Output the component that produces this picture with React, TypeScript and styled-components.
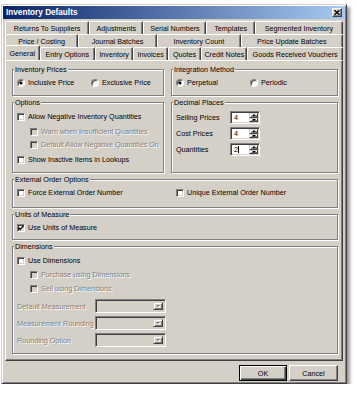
import styled, { createGlobalStyle } from 'styled-components';
import { FC, ReactNode } from 'react';

const FACE = '#d4d0c8';
const SHADOW = '#808080';
const DARK = '#404040';

const GlobalStyle = createGlobalStyle`
  * { box-sizing: border-box; }
  html, body { margin: 0; padding: 0; background: #fff; }
  body {
    font-family: "Liberation Sans", Arial, sans-serif;
    font-size: 7.2px;
    color: #000;
  }
`;

const Window = styled.div`
  margin: 4px 0 0 1px;
  width: 346px;
  height: 380px;
  padding: 1px;
  background: ${FACE};
  border: 1px solid;
  border-color: ${FACE} ${DARK} ${DARK} ${FACE};
  box-shadow: inset 1px 1px 0 #fff, inset -1px -1px 0 ${SHADOW}, 3px 3px 3px rgba(0, 0, 0, 0.4);
  display: flex;
  flex-direction: column;
`;

const TitleBar = styled.div`
  flex: none;
  height: 13px;
  display: flex;
  align-items: center;
  justify-content: space-between;
  padding: 0 3px 0 3px;
  background: linear-gradient(to right, #0a246a, #a6caf0);
`;

const Title = styled.span`
  color: #fff;
  font-weight: bold;
  font-size: 8.2px;
`;

const CloseButton = styled.div`
  width: 10px;
  height: 9px;
  background: ${FACE};
  border: 1px solid;
  border-color: #fff ${DARK} ${DARK} #fff;
  box-shadow: inset -1px -1px 0 ${SHADOW};
  display: flex;
  align-items: center;
  justify-content: center;
`;

const Body = styled.div`
  flex: 1;
  display: flex;
  flex-direction: column;
  padding: 2px 2px 0;
`;

const TabRow = styled.div`
  display: flex;
  height: 13px;
`;

const Tab = styled.div<{ $w: number; $active?: boolean }>`
  flex: ${p => p.$w} 1 0;
  min-width: 0;
  height: ${p => (p.$active ? 15 : 13)}px;
  margin-top: ${p => (p.$active ? -2 : 0)}px;
  position: relative;
  z-index: ${p => (p.$active ? 2 : 0)};
  background: ${FACE};
  border: 1px solid;
  border-bottom: none;
  border-color: #fff ${DARK} transparent #fff;
  box-shadow: inset -1px 0 0 ${SHADOW};
  border-radius: 2px 2px 0 0;
  display: flex;
  align-items: center;
  justify-content: center;
  white-space: nowrap;
`;

const Panel = styled.div`
  flex: none;
  height: 301px;
  border: 1px solid;
  border-color: #fff ${DARK} ${DARK} #fff;
  box-shadow: inset -1px -1px 0 ${SHADOW};
  padding: 4px 4px 0 6px;
  display: flex;
  flex-direction: column;
  gap: 2px;
`;

const TopGrid = styled.div`
  display: grid;
  grid-template-columns: 152px 1fr;
  column-gap: 7px;
  row-gap: 2px;
`;

const GroupBox = styled.fieldset<{ $h: number; $pt: number }>`
  margin: 0;
  min-width: 0;
  height: ${p => p.$h}px;
  padding: ${p => p.$pt}px 4px 0;
  border: 1px solid ${SHADOW};
  box-shadow: inset 1px 1px 0 #fff, 1px 1px 0 #fff;
  display: flex;
  flex-direction: column;
`;

const Legend = styled.legend`
  padding: 0 1px;
  margin-left: -3px;
  line-height: 9px;
  background: ${FACE};
`;

const Option = styled.div<{ $indent?: number; $mt?: number; $disabled?: boolean }>`
  display: flex;
  align-items: center;
  gap: 3px;
  height: 9px;
  margin-left: ${p => p.$indent ?? 0}px;
  margin-top: ${p => p.$mt ?? 0}px;
  color: ${p => (p.$disabled ? SHADOW : '#000')};
  text-shadow: ${p => (p.$disabled ? '1px 1px 0 #fff' : 'none')};
  white-space: nowrap;
`;

const Pair = styled.div<{ $col: number }>`
  display: grid;
  grid-template-columns: ${p => p.$col}px 1fr;
`;

const CheckBox = styled.span<{ $disabled?: boolean }>`
  flex: none;
  width: 8px;
  height: 8px;
  background: ${p => (p.$disabled ? FACE : '#fff')};
  border: 1px solid;
  border-color: ${SHADOW} #fff #fff ${SHADOW};
  box-shadow: inset 1px 1px 0 ${DARK}, inset -1px -1px 0 ${FACE};
  display: flex;
  align-items: center;
  justify-content: center;
`;

const RadioDot = styled.span<{ $checked?: boolean }>`
  flex: none;
  width: 8px;
  height: 8px;
  border-radius: 50%;
  background: #fff;
  border: 1px solid;
  border-color: ${SHADOW} #fff #fff ${SHADOW};
  box-shadow: inset 1px 1px 0 ${DARK};
  display: flex;
  align-items: center;
  justify-content: center;

  &::after {
    content: '';
    display: ${p => (p.$checked ? 'block' : 'none')};
    width: 2px;
    height: 2px;
    border-radius: 50%;
    background: #000;
    box-shadow: 0 0 0 0.5px #000;
  }
`;

const FieldRow = styled.div<{ $label: number; $h: number; $mt?: number; $disabled?: boolean }>`
  display: grid;
  grid-template-columns: ${p => p.$label}px auto;
  align-items: center;
  justify-content: start;
  height: ${p => p.$h}px;
  margin-top: ${p => p.$mt ?? 0}px;
  color: ${p => (p.$disabled ? SHADOW : '#000')};
  text-shadow: ${p => (p.$disabled ? '1px 1px 0 #fff' : 'none')};
  white-space: nowrap;
`;

const SpinBox = styled.div`
  width: 30px;
  height: 13px;
  display: flex;
  padding: 1px;
  background: #fff;
  border: 1px solid;
  border-color: ${SHADOW} #fff #fff ${SHADOW};
  box-shadow: inset 1px 1px 0 ${DARK}, inset -1px -1px 0 ${FACE};
`;

const SpinValue = styled.span`
  flex: 1;
  display: flex;
  align-items: center;
  padding-left: 2px;
`;

const Caret = styled.span`
  width: 1px;
  height: 7px;
  background: #000;
`;

const SpinButtons = styled.div`
  width: 9px;
  display: flex;
  flex-direction: column;
`;

const MiniButton = styled.div`
  flex: 1;
  background: ${FACE};
  border: 1px solid;
  border-color: ${FACE} ${DARK} ${DARK} ${FACE};
  box-shadow: inset 1px 1px 0 #fff, inset -1px -1px 0 ${SHADOW};
  display: flex;
  align-items: center;
  justify-content: center;
`;

const Arrow = styled.span<{ $dir: 'up' | 'down'; $disabled?: boolean }>`
  width: 0;
  height: 0;
  border-left: 2px solid transparent;
  border-right: 2px solid transparent;
  ${p => (p.$dir === 'up' ? 'border-bottom' : 'border-top')}: 2px solid ${p => (p.$disabled ? SHADOW : '#000')};
  filter: ${p => (p.$disabled ? 'drop-shadow(1px 1px 0 #fff)' : 'none')};
`;

const Combo = styled.div`
  width: 71px;
  height: 14px;
  display: flex;
  justify-content: flex-end;
  padding: 2px;
  background: ${FACE};
  border: 1px solid;
  border-color: ${SHADOW} #fff #fff ${SHADOW};
  box-shadow: inset 1px 1px 0 ${DARK}, inset -1px -1px 0 ${FACE};
`;

const DropButton = styled(MiniButton)`
  flex: none;
  width: 10px;
`;

const ButtonBar = styled.div`
  display: flex;
  justify-content: flex-end;
  gap: 2px;
  margin-top: 4px;
  padding-right: 5px;
`;

const Button = styled.button<{ $w: number; $default?: boolean }>`
  width: ${p => p.$w}px;
  height: 16px;
  padding: 0;
  font: inherit;
  color: #000;
  background: ${FACE};
  border: 1px solid;
  border-color: ${p => (p.$default ? '#000' : `#fff ${DARK} ${DARK} #fff`)};
  box-shadow: ${p =>
    p.$default
      ? `inset 1px 1px 0 #fff, inset -1px -1px 0 ${DARK}, inset -2px -2px 0 ${SHADOW}`
      : `inset -1px -1px 0 ${SHADOW}`};
`;

const tabRows: [string, number][][] = [
  [['Returns To Suppliers', 85], ['Adjustments', 54], ['Serial Numbers', 63], ['Templates', 48], ['Segmented Inventory', 89]],
  [['Price / Costing', 73], ['Journal Batches', 79], ['Inventory Count', 84], ['Price Update Batches', 103]],
  [['General', 34], ['Entry Options', 56], ['Inventory', 38], ['Invoices', 34], ['Quotes', 33], ['Credit Notes', 46], ['Goods Received Vouchers', 98]],
];

const Tick = () => (
  <svg width="6" height="6" viewBox="0 0 6 6">
    <polyline points="0.6,2.6 2.2,4.4 5.4,0.9" fill="none" stroke="#000" strokeWidth="1.4" />
  </svg>
);

const Check: FC<{ label: string; checked?: boolean; disabled?: boolean; indent?: number; mt?: number }> = ({
  label, checked, disabled, indent, mt,
}) => (
  <Option $indent={indent} $mt={mt} $disabled={disabled}>
    <CheckBox $disabled={disabled}>{checked && <Tick />}</CheckBox>
    {label}
  </Option>
);

const Radio: FC<{ label: string; checked?: boolean }> = ({ label, checked }) => (
  <Option>
    <RadioDot $checked={checked} />
    {label}
  </Option>
);

const Spinner: FC<{ value: ReactNode; mt?: number; label: string }> = ({ value, mt, label }) => (
  <FieldRow $label={54} $h={13} $mt={mt}>
    {label}
    <SpinBox>
      <SpinValue>{value}</SpinValue>
      <SpinButtons>
        <MiniButton><Arrow $dir="up" /></MiniButton>
        <MiniButton><Arrow $dir="down" /></MiniButton>
      </SpinButtons>
    </SpinBox>
  </FieldRow>
);

const ComboField: FC<{ label: string; mt: number }> = ({ label, mt }) => (
  <FieldRow $label={78} $h={14} $mt={mt} $disabled>
    {label}
    <Combo>
      <DropButton><Arrow $dir="down" $disabled /></DropButton>
    </Combo>
  </FieldRow>
);

export default function App() {
  return (
    <>
      <GlobalStyle />
      <Window>
        <TitleBar>
          <Title>Inventory Defaults</Title>
          <CloseButton>
            <svg width="6" height="5" viewBox="0 0 6 5">
              <path d="M0.5 0.3 L5.5 4.7 M5.5 0.3 L0.5 4.7" stroke="#000" strokeWidth="1.4" />
            </svg>
          </CloseButton>
        </TitleBar>
        <Body>
          {tabRows.map((row, i) => (
            <TabRow key={i}>
              {row.map(([name, w]) => (
                <Tab key={name} $w={w} $active={name === 'General'}>{name}</Tab>
              ))}
            </TabRow>
          ))}
          <Panel>
            <TopGrid>
              <GroupBox $h={31} $pt={4}>
                <Legend>Inventory Prices</Legend>
                <Pair $col={74}>
                  <Radio label="Inclusive Price" checked />
                  <Radio label="Exclusive Price" />
                </Pair>
              </GroupBox>
              <GroupBox $h={31} $pt={4}>
                <Legend>Integration Method</Legend>
                <Pair $col={74}>
                  <Radio label="Perpetual" checked />
                  <Radio label="Periodic" />
                </Pair>
              </GroupBox>
              <GroupBox $h={75} $pt={5}>
                <Legend>Options</Legend>
                <Check label="Allow Negative Inventory Quantities" />
                <Check label="Warn when Insufficient Quantities" disabled indent={13} mt={6} />
                <Check label="Default Allow Negative Quantities On" disabled indent={13} mt={4} />
                <Check label="Show Inactive Items in Lookups" mt={6} />
              </GroupBox>
              <GroupBox $h={75} $pt={4}>
                <Legend>Decimal Places</Legend>
                <Spinner label="Selling Prices" value="4" />
                <Spinner label="Cost Prices" value="4" mt={3} />
                <Spinner label="Quantities" value={<>2<Caret /></>} mt={3} />
              </GroupBox>
            </TopGrid>
            <GroupBox $h={33} $pt={4}>
              <Legend>External Order Options</Legend>
              <Pair $col={159}>
                <Check label="Force External Order Number" />
                <Check label="Unique External Order Number" />
              </Pair>
            </GroupBox>
            <GroupBox $h={30} $pt={4}>
              <Legend>Units of Measure</Legend>
              <Check label="Use Units of Measure" checked />
            </GroupBox>
            <GroupBox $h={112} $pt={5}>
              <Legend>Dimensions</Legend>
              <Check label="Use Dimensions" />
              <Check label="Purchase using Dimensions" disabled indent={13} mt={5} />
              <Check label="Sell using Dimensions" disabled indent={13} mt={5} />
              <ComboField label="Default Measurement" mt={6} />
              <ComboField label="Measurement Rounding" mt={3} />
              <ComboField label="Rounding Option" mt={3} />
            </GroupBox>
          </Panel>
          <ButtonBar>
            <Button $w={48} $default>OK</Button>
            <Button $w={49}>Cancel</Button>
          </ButtonBar>
        </Body>
      </Window>
    </>
  );
}
